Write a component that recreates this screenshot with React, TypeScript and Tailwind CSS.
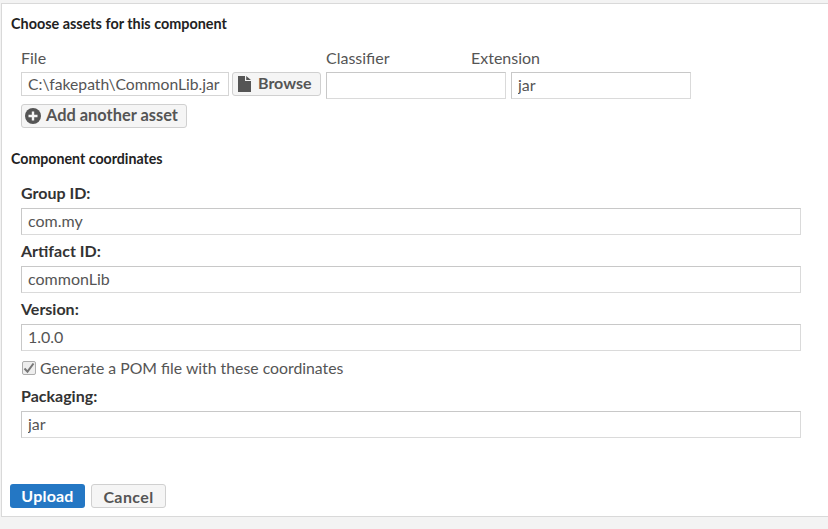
const fields = [
  { label: "Group ID:", value: "com.my" },
  { label: "Artifact ID:", value: "commonLib" },
  { label: "Version:", value: "1.0.0" },
];

const inputClass =
  "block h-[27px] border border-[#c8c8c8] border-b-[#dadada] border-r-[#dadada] bg-white px-[6px] pb-[2px] text-[16px] text-[#555] outline-none";

const btnClass = "rounded-[3px] border border-[#d0d0d0] bg-[#f5f5f5] font-bold text-[#555]";

const FileIcon = () => (
  <svg width="13" height="16" viewBox="0 0 13 16" className="mr-[7px] mt-[2px] shrink-0">
    <path d="M0 0h7v5h6v11H0z M8.2 0L13 3.9H8.2z" fill="#555" />
  </svg>
);

const PlusCircleIcon = () => (
  <svg width="16" height="16" viewBox="0 0 16 16" className="mr-[5px] mt-[2px] shrink-0">
    <circle cx="8" cy="8" r="8" fill="#555" />
    <path d="M6.8 3.5h2.4v3.3h3.3v2.4H9.2v3.3H6.8V9.2H3.5V6.8h3.3z" fill="#f5f5f5" />
  </svg>
);

const App = () => {
  return (
    <div className="h-[529px] w-[828px] overflow-hidden bg-[#f3f3f3] pt-[3px] pl-[1px] font-['Lato',sans-serif]">
      <div className="h-[514px] border border-r-0 border-[#d9d9d9] bg-white pl-[9px]">
        <h3 className="pt-[12px] text-[14.4px] leading-[16px] font-bold text-[#222]">Choose assets for this component</h3>

        <div className="ml-[10px] pt-[17px]">
          <div className="flex h-[18px] text-[16px] leading-[18px] text-[#555]">
            <span className="w-[305px]">File</span>
            <span className="w-[145px]">Classifier</span>
            <span>Extension</span>
          </div>
          <div className="mt-[5px] flex items-start">
            <input readOnly value="C:\fakepath\CommonLib.jar" className="block h-[24px] w-[208px] border border-[#d5d5d5] bg-white px-[6px] pb-[1px] text-[15.7px] text-[#555] outline-none" />
            <button className={`${btnClass} ml-[3px] flex h-[24px] w-[89px] items-center pb-[2px] pl-[5px] text-[16px]`}>
              <FileIcon />
              Browse
            </button>
            <input className={`${inputClass} ml-[5px] w-[180px]`} />
            <input readOnly value="jar" className={`${inputClass} ml-[5px] w-[180px]`} />
          </div>
          <button className={`${btnClass} mt-[5px] flex h-[24px] w-[166px] items-center pb-[2px] pl-[3px] text-[16.4px]`}>
            <PlusCircleIcon />
            Add another asset
          </button>
        </div>

        <h3 className="pt-[23px] text-[14.2px] leading-[16px] font-bold text-[#222]">Component coordinates</h3>

        <div className="ml-[10px] flex w-[780px] flex-col gap-[6px] pt-[16px]">
          {fields.map((f) => (
            <div key={f.label}>
              <label className="block h-[19px] text-[16px] leading-[19px] font-bold text-[#333]">{f.label}</label>
              <input readOnly value={f.value} className={`${inputClass} mt-[6px] w-full`} />
            </div>
          ))}
          <label className="mt-[1px] flex h-[20px] items-center text-[15.8px] text-[#555]">
            <span className="ml-[1px] mr-[4px] flex h-[14px] w-[14px] items-center justify-center rounded-[2px] border border-[#adadad] bg-[#eee]">
              <svg width="12" height="12" viewBox="0 0 12 12">
                <path d="M1.5 6.5l3 3.2L10.5 1.5" fill="none" stroke="#777" strokeWidth="2" />
              </svg>
            </span>
            Generate a POM file with these coordinates
          </label>
          <div className="mt-[2px]">
            <label className="block h-[19px] text-[16px] leading-[19px] font-bold text-[#333]">Packaging:</label>
            <input readOnly value="jar" className={`${inputClass} mt-[6px] w-full`} />
          </div>
        </div>

        <div className="-ml-[1px] mt-[46px] flex gap-[6px]">
          <button className="h-[24px] w-[75px] rounded-[3px] bg-[#2477c4] pb-[3px] text-[16px] font-bold tracking-[0.2px] text-white">Upload</button>
          <button className={`${btnClass} h-[24px] w-[75px] pb-[3px] text-[16px] tracking-[0.4px]`}>Cancel</button>
        </div>
      </div>
    </div>
  );
};

export default App;
